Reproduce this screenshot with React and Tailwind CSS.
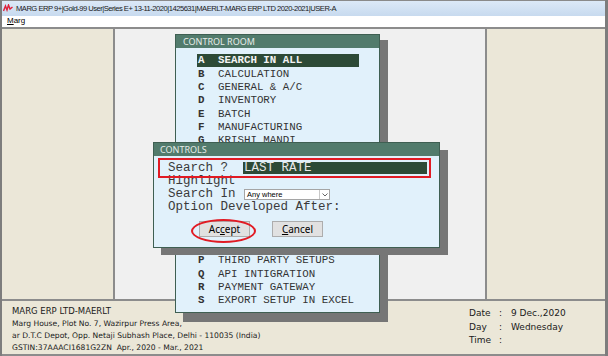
import React from "react";

const items = [
  ["A", "SEARCH IN ALL"],
  ["B", "CALCULATION"],
  ["C", "GENERAL & A/C"],
  ["D", "INVENTORY"],
  ["E", "BATCH"],
  ["F", "MANUFACTURING"],
  ["G", "KRISHI MANDI"],
  ["H", "HOSPITAL"],
  ["I", "PRINTING"],
  ["J", "E-COMMERCE"],
  ["K", "RETAIL"],
  ["L", "LOYALTY"],
  ["M", "MOBILE APP"],
  ["N", "NOTIFICATIONS"],
  ["O", "OTHERS"],
  ["P", "THIRD PARTY SETUPS"],
  ["Q", "API INTIGRATION"],
  ["R", "PAYMENT GATEWAY"],
  ["S", "EXPORT SETUP IN EXCEL"],
];

export default function App() {
  return (
    <div className="relative w-[608px] h-[356px] overflow-hidden bg-white" style={{ fontFamily: "'Noto Sans', sans-serif" }}>
      <div className="flex flex-col h-full border-l-2 border-r-[3px] border-[#7d7d7d]">
        {/* title bar */}
        <div className="h-[16px] flex items-center gap-[3px] pl-[1px] bg-gradient-to-b from-[#dce9f7] to-[#c7daef] border-t border-[#8a8a8a]">
          <svg width="10" height="8" viewBox="0 0 10 8">
            <path d="M0.5 7 L2.5 2 L4 6 L5.5 1 L7 5 L9.5 3" fill="none" stroke="#e0203a" strokeWidth="1.4" />
          </svg>
          <span className="text-[7.6px] leading-none text-[#1a1a1a] tracking-[-0.5px]" style={{ fontFamily: "'Liberation Sans', sans-serif" }}>
            MARG ERP 9+|Gold-99 User|Series E+ 13-11-2020|1425631|MAERLT-MARG ERP LTD 2020-2021|USER-A
          </span>
        </div>
        {/* menu bar */}
        <div className="h-[11px] flex items-center pl-[5px] bg-white">
          <span className="text-[8px] leading-none text-black" style={{ fontFamily: "'Liberation Sans', sans-serif" }}>
            <span className="underline">M</span>arg
          </span>
        </div>
        {/* main */}
        <div className="flex h-[273px] border-t-2 border-[#8c8c8c]">
          <div className="w-[113px] bg-[#ebe7d8] border-r-2 border-[#8c8c8c]" />
          <div className="flex-1 bg-[#f0f0f0] border-r-2 border-[#8c8c8c]" />
          <div className="w-[118px] bg-[#ebe7d8]" />
        </div>
        {/* footer */}
        <div className="flex-1 flex bg-[#ebe7d8] border-t-2 border-b-2 border-[#8c8c8c]">
          <div className="flex-1 pl-[10px] pt-[4px] text-[#1a1a1a]" style={{ fontFamily: "'DejaVu Sans', sans-serif" }}>
            <div className="text-[8.5px] leading-[13px]">MARG ERP LTD-MAERLT</div>
            <div className="text-[7.6px] leading-[12px]">Marg House, Plot No. 7, Wazirpur Press Area,</div>
            <div className="text-[7.6px] leading-[12px]">ar D.T.C Depot, Opp. Netaji Subhash Place, Delhi - 110035 (India)</div>
            <div className="text-[7.6px] leading-[12px]">GSTIN:37AAACI1681G2ZN&nbsp; Apr., 2020 - Mar., 2021</div>
          </div>
          <div className="w-[136px] pt-[6px] text-[#1a1a1a] text-[9px] leading-[13.5px]" style={{ fontFamily: "'DejaVu Sans', sans-serif" }}>
            <div className="flex"><span className="w-[30px]">Date</span><span className="w-[12px]">:</span><span>9 Dec.,2020</span></div>
            <div className="flex"><span className="w-[30px]">Day</span><span className="w-[12px]">:</span><span>Wednesday</span></div>
            <div className="flex"><span className="w-[30px]">Time</span><span className="w-[12px]">:</span></div>
          </div>
        </div>
      </div>

      {/* CONTROL ROOM window */}
      <div className="absolute left-[183px] top-[40px] w-[205px] h-[282px] bg-[#767676]" />
      <div className="absolute left-[175px] top-[34px] w-[205px] h-[279px] bg-[#e1f1fb] border border-[#3f5f52] flex flex-col">
        <div className="h-[13px] bg-[#527b6c] flex items-center pl-[7px] text-[9px] leading-none text-[#e6ece9]">CONTROL ROOM</div>
        <div className="pt-[6px] pl-[21px] pr-[20px]" style={{ fontFamily: "'Liberation Mono', monospace" }}>
          {items.map(([k, t], i) => (
            <div
              key={k}
              className={
                "flex h-[13.33px] items-center pl-[1px] text-[10.8px] leading-none " +
                (i === 0 ? "bg-[#2d4a36] text-[#f3f3f3] font-bold" : "text-[#333]")
              }
            >
              <span className="w-[20px] font-bold">{k}</span>
              <span>{t}</span>
            </div>
          ))}
        </div>
      </div>

      {/* CONTROLS dialog */}
      <div className="absolute left-[161px] top-[150px] w-[287px] h-[105px] bg-[#767676]" />
      <div className="absolute left-[153px] top-[142px] w-[287px] h-[106px] bg-[#e1f1fb] border border-[#3f5f52] flex flex-col">
        <div className="h-[13px] bg-[#527b6c] flex items-center pl-[6px] text-[9px] leading-none text-[#e6ece9]">CONTROLS</div>
        <div className="relative flex flex-col pl-[14px] pt-[2px]" style={{ fontFamily: "'Liberation Mono', monospace" }}>
          <div className="relative z-10 w-[273px] -ml-[10px] h-[20px] border-2 border-[#e11b24] flex items-center pl-[8px]">
            <span className="w-[75px] text-[12.5px] leading-none text-[#3a3a3a]">Search ?</span>
            <span className="h-[12px] w-[184px] bg-[#2d4a36] text-[12.5px] leading-[12px] text-[#e8e8e8] pl-[1px]">LAST RATE</span>
          </div>
          <div className="-mt-[3px] h-[13px] flex items-center text-[12.5px] leading-none text-[#3a3a3a]">Highlight</div>
          <div className="h-[13px] flex items-center text-[12.5px] leading-none text-[#3a3a3a]">
            <span className="w-[76px]">Search In</span>
            <div className="w-[86px] h-[11px] bg-white border border-[#a5a5a5] flex items-center justify-between">
              <span className="pl-[2px] text-[7.5px] leading-none text-black" style={{ fontFamily: "'Liberation Sans', sans-serif" }}>Any where</span>
              <span className="w-[10px] h-[9px] border-l border-[#c8c8c8] flex items-center justify-center">
                <svg width="6" height="4" viewBox="0 0 6 4"><path d="M0.5 0.5 L3 3 L5.5 0.5" fill="none" stroke="#555" strokeWidth="0.9" /></svg>
              </span>
            </div>
          </div>
          <div className="h-[13px] flex items-center text-[12.5px] leading-none text-[#3a3a3a]">Option Developed After:</div>
          <div className="flex gap-[22px] pl-[31px] pt-[7px]">
            <div className="w-[51px] h-[16px] bg-[#e1e1e1] border border-[#adadad] flex items-center justify-center text-[10px] leading-none text-black" style={{ fontFamily: "'Noto Sans', sans-serif" }}>
              <span>Ac<span className="underline">c</span>ept</span>
            </div>
            <div className="w-[51px] h-[16px] bg-[#e1e1e1] border border-[#adadad] flex items-center justify-center text-[10px] leading-none text-black" style={{ fontFamily: "'Noto Sans', sans-serif" }}>
              <span><span className="underline">C</span>ancel</span>
            </div>
          </div>
        </div>
      </div>
      {/* red ellipse around Accept */}
      <div className="absolute left-[191px] top-[219px] w-[65px] h-[24px] rounded-[50%] border-2 border-[#e11b24]" />
    </div>
  );
}
